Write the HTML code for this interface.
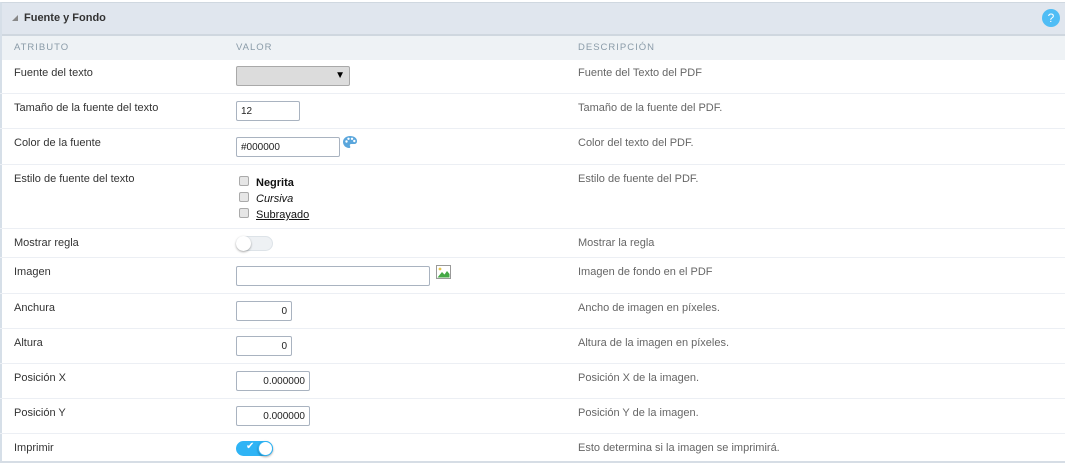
<!DOCTYPE html>
<html><head><meta charset="utf-8"><style>
*{box-sizing:border-box;margin:0;padding:0}
body{width:1065px;height:463px;background:#fff;font-family:"Liberation Sans",Arial,sans-serif;font-size:11px;color:#333;position:relative;overflow:hidden}
.wrap{position:absolute;left:0;top:2px;width:1065px;height:461px;border-left:2px solid #d6dfe8;border-top:1px solid #d0d8e0}
.hdr{position:absolute;left:0;top:0;width:1065px;height:33px;background:#e0e6ee;border-bottom:2px solid #cfd7df}
.hdr span{position:absolute;left:22px;top:9px;font-weight:bold;font-size:11px;color:#333}
.tri{position:absolute;left:10px;top:12px;width:0;height:0;border-left:6px solid transparent;border-bottom:6px solid #888}
.help{position:absolute;left:1040px;top:6px;width:18px;height:18px;border-radius:50%;background:#4fbdf5;color:#fff;text-align:center;font-size:12px;line-height:18px}
.ch{position:absolute;left:0;top:33px;width:1065px;height:24px;background:#eef2f5;font-size:9.5px;letter-spacing:1px;color:#8a9ba8}
.ch span{position:absolute;top:6px}
.row{position:absolute;left:0;width:1065px;border-top:1px solid #eceff4}
.l{position:absolute;left:14px;top:8px}
.d{position:absolute;left:578px;top:8px;color:#666}
.v{position:absolute;left:234px}
input{font-family:inherit;font-size:10px;border:1px solid #a9b3c0;border-radius:2px;height:20px;padding:0 4px;background:#fff;color:#222}
.num{text-align:right}
.chk{display:block;width:10px;height:10px;border:1px solid #aaa;border-radius:2px;background:#e6e6e6;position:absolute;left:3px}
.tog{position:absolute;width:37px;height:15px;border-radius:8px;background:#eef1f4;border:1px solid #dde3e8}
.knob{position:absolute;top:-1px;width:15px;height:15px;border-radius:50%;background:#fff;box-shadow:0 1px 2px rgba(0,0,0,.35)}
</style></head><body>
<div class="wrap">
<div class="hdr"><div class="tri"></div><span>Fuente y Fondo</span><div class="help">?</div></div>
<div class="ch"><span style="left:12px">ATRIBUTO</span><span style="left:234px">VALOR</span><span style="left:576px">DESCRIPCIÓN</span></div>
</div>
<div class="row" style="top:59px;height:34px;border-top:none"><div class="l">Fuente del texto</div>
<div class="v" style="top:7px;left:236px;width:114px;height:20px;background:#dcdcdc;border:1px solid #a9a9a9;border-radius:2px"><span style="position:absolute;right:4px;top:3px;font-size:10px;color:#000">▼</span></div>
<div class="d">Fuente del Texto del PDF</div></div>
<div class="row" style="top:93px;height:35px"><div class="l">Tamaño de la fuente del texto</div><input class="v" style="top:7px;left:236px;width:64px" value="12"><div class="d">Tamaño de la fuente del PDF.</div></div>
<div class="row" style="top:128px;height:36px"><div class="l">Color de la fuente</div><input class="v" style="top:8px;left:236px;width:104px" value="#000000">
<svg style="position:absolute;left:342px;top:6px" width="16" height="14" viewBox="0 0 16 14"><path d="M8 1C4 1 1 3.5 1 7s3 6 6 6c1.5 0 1.5-1 1-2-.5-1 0-2 1.5-2H12c2 0 3-1 3-3 0-3-3-5-7-5z" fill="#5aa6dc"/><circle cx="4.5" cy="6.5" r="1.2" fill="#fff"/><circle cx="6.5" cy="3.8" r="1.2" fill="#fff"/><circle cx="10" cy="3.8" r="1.2" fill="#fff"/><circle cx="12.3" cy="6" r="1.2" fill="#fff"/></svg>
<div class="d">Color del texto del PDF.</div></div>
<div class="row" style="top:164px;height:64px"><div class="l">Estilo de fuente del texto</div>
<div class="v" style="top:10px;left:236px;width:200px;height:50px">
<span class="chk" style="top:1px"></span><b style="position:absolute;left:20px;top:2px;color:#111">Negrita</b>
<span class="chk" style="top:17px"></span><i style="position:absolute;left:20px;top:18px;color:#111">Cursiva</i>
<span class="chk" style="top:33px"></span><u style="position:absolute;left:20px;top:34px;color:#111">Subrayado</u></div>
<div class="d">Estilo de fuente del PDF.</div></div>
<div class="row" style="top:228px;height:29px"><div class="l">Mostrar regla</div><div class="tog" style="left:236px;top:7px"><div class="knob" style="left:-1px"></div></div><div class="d">Mostrar la regla</div></div>
<div class="row" style="top:257px;height:36px"><div class="l">Imagen</div><input class="v" style="top:8px;left:236px;width:194px">
<svg style="position:absolute;left:436px;top:7px" width="15" height="14" viewBox="0 0 15 14"><rect x=".5" y=".5" width="14" height="13" fill="#fff" stroke="#999"/><path d="M1.5 12.5 L6 7 L8.5 9.5 L11 6 L13.5 9 V12.5Z" fill="#44a845"/><circle cx="4" cy="4" r="1.4" fill="#e6c44a"/></svg>
<div class="d">Imagen de fondo en el PDF</div></div>
<div class="row" style="top:293px;height:35px"><div class="l">Anchura</div><input class="v num" style="top:7px;left:236px;width:56px" value="0"><div class="d">Ancho de imagen en píxeles.</div></div>
<div class="row" style="top:328px;height:35px"><div class="l">Altura</div><input class="v num" style="top:7px;left:236px;width:56px" value="0"><div class="d">Altura de la imagen en píxeles.</div></div>
<div class="row" style="top:363px;height:35px"><div class="l">Posición X</div><input class="v num" style="top:7px;left:236px;width:74px" value="0.000000"><div class="d">Posición X de la imagen.</div></div>
<div class="row" style="top:398px;height:35px"><div class="l">Posición Y</div><input class="v num" style="top:7px;left:236px;width:74px" value="0.000000"><div class="d">Posición Y de la imagen.</div></div>
<div class="row" style="top:433px;height:30px;border-bottom:2px solid #d6dde5"><div class="l">Imprimir</div><div class="tog" style="left:236px;top:7px;background:#2fb4f5;border-color:#2fb4f5"><span style="position:absolute;left:9px;top:-1px;color:#fff;font-size:10px">✔</span><div class="knob" style="left:21px;border:1px solid #2fb4f5"></div></div><div class="d">Esto determina si la imagen se imprimirá.</div></div>
</body></html>
